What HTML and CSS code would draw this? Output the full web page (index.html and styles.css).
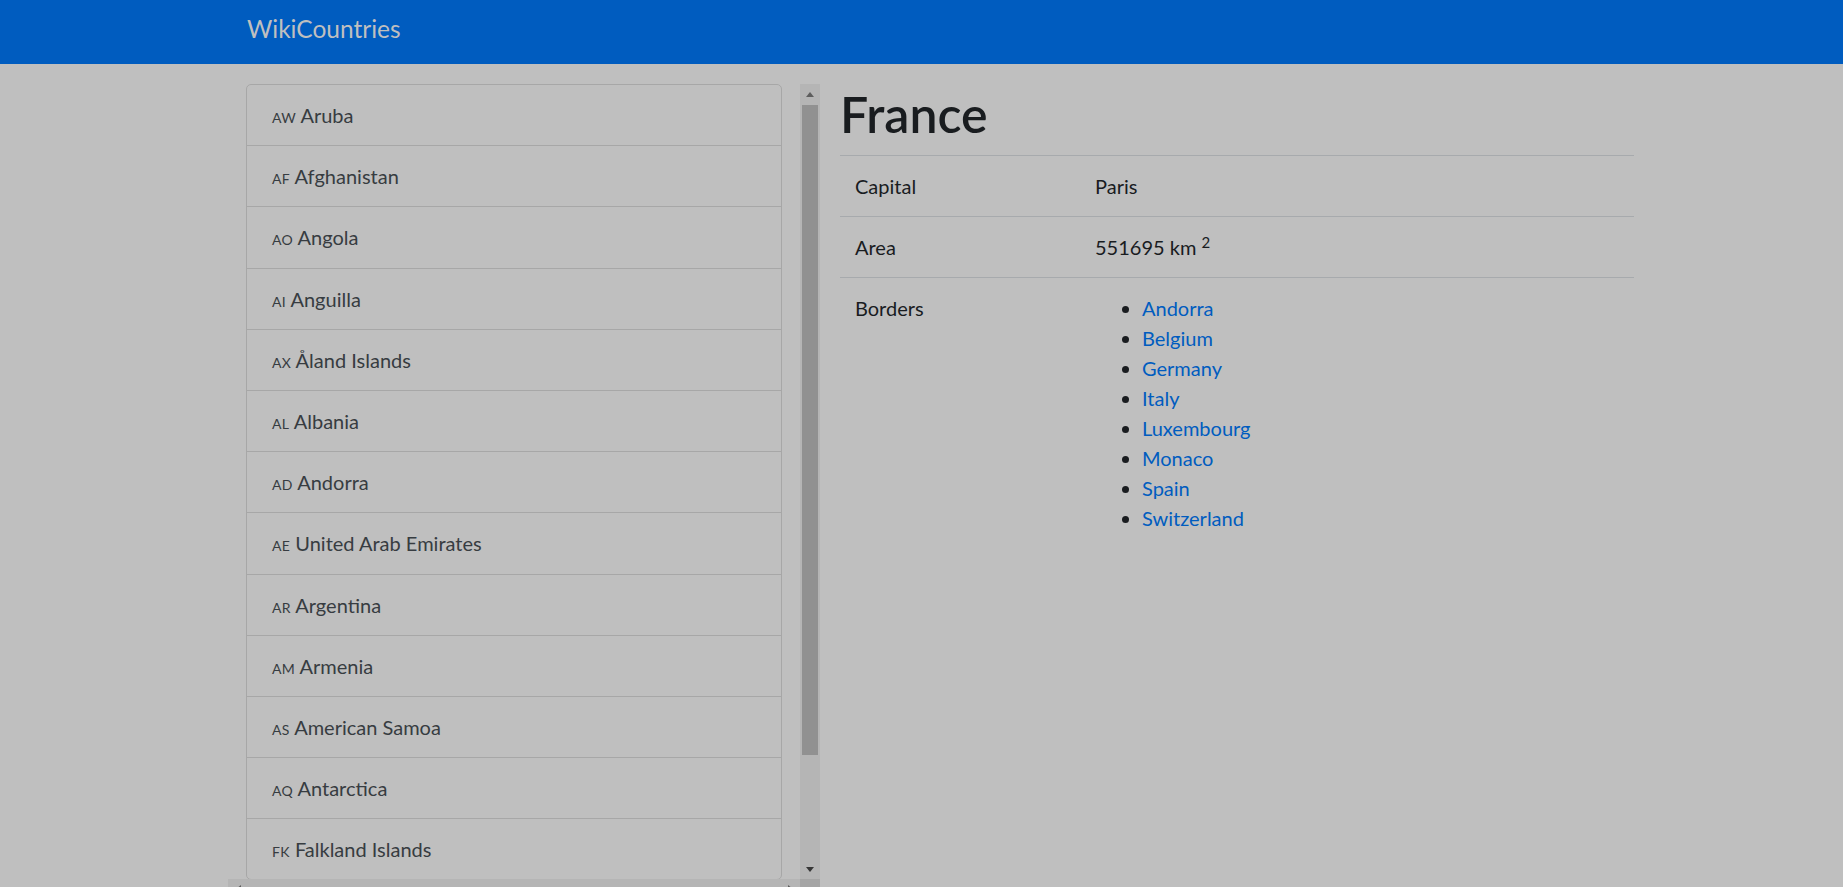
FILE: index.html
```html
<!DOCTYPE html>
<html lang="en">
<head>
<meta charset="utf-8">
<title>WikiCountries</title>
<link rel="stylesheet" href="styles.css">
</head>
<body>
<nav class="navbar">
  <a class="brand" href="#">WikiCountries</a>
</nav>
<main class="layout">
  <section class="scroller">
    <div class="scroll-view">
      <div class="list-group">
        <a class="item" href="#"><span class="code">AW</span> Aruba</a>
        <a class="item" href="#"><span class="code">AF</span> Afghanistan</a>
        <a class="item" href="#"><span class="code">AO</span> Angola</a>
        <a class="item" href="#"><span class="code">AI</span> Anguilla</a>
        <a class="item" href="#"><span class="code">AX</span> Åland Islands</a>
        <a class="item" href="#"><span class="code">AL</span> Albania</a>
        <a class="item" href="#"><span class="code">AD</span> Andorra</a>
        <a class="item" href="#"><span class="code">AE</span> United Arab Emirates</a>
        <a class="item" href="#"><span class="code">AR</span> Argentina</a>
        <a class="item" href="#"><span class="code">AM</span> Armenia</a>
        <a class="item" href="#"><span class="code">AS</span> American Samoa</a>
        <a class="item" href="#"><span class="code">AQ</span> Antarctica</a>
        <a class="item" href="#"><span class="code">FK</span> Falkland Islands</a>
      </div>
    </div>
    <div class="vbar">
      <div class="sb-btn"><span class="arrow-up"></span></div>
      <div class="vtrack"><div class="vthumb"></div></div>
      <div class="sb-btn"><span class="arrow-down"></span></div>
    </div>
    <div class="hbar">
      <div class="sb-btn"><span class="arrow-left"></span></div>
      <div class="htrack"></div>
      <div class="sb-btn"><span class="arrow-right"></span></div>
    </div>
    <div class="corner"></div>
  </section>
  <section class="detail">
    <h1>France</h1>
    <table class="facts">
      <tr>
        <td class="label">Capital</td>
        <td>Paris</td>
      </tr>
      <tr>
        <td class="label">Area</td>
        <td>551695 km <sup>2</sup></td>
      </tr>
      <tr>
        <td class="label">Borders</td>
        <td>
          <ul class="borders">
            <li><a href="#">Andorra</a></li>
            <li><a href="#">Belgium</a></li>
            <li><a href="#">Germany</a></li>
            <li><a href="#">Italy</a></li>
            <li><a href="#">Luxembourg</a></li>
            <li><a href="#">Monaco</a></li>
            <li><a href="#">Spain</a></li>
            <li><a href="#">Switzerland</a></li>
          </ul>
        </td>
      </tr>
    </table>
  </section>
</main>
</body>
</html>
```
FILE: styles.css
```css
html, body {
  margin: 0;
  height: 100%;
  overflow: hidden;
}

body {
  background: #bfbfbf;
  font-family: Lato, "Liberation Sans", sans-serif;
  font-size: 20px;
  line-height: 30px;
  color: #191c1f;
}

.navbar {
  height: 64px;
  box-sizing: border-box;
  padding: 0 0 7px 247px;
  display: flex;
  align-items: center;
  background: #005cbf;
}

.brand {
  font-size: 24.5px;
  line-height: 1.2;
  color: #bfbfbf;
  text-decoration: none;
}

.layout {
  display: flex;
  align-items: flex-start;
  gap: 20px;
  padding: 20px 0 0 228px;
}

/* scrollable country list */
.scroller {
  flex: none;
  display: grid;
  grid-template-columns: 572px 20px;
  grid-template-rows: 795px 20px;
}

.scroll-view {
  overflow: hidden;
  padding: 0 18px;
}

.list-group {
  border: 1px solid #a7a7a7;
  border-radius: 5px;
}

.item {
  display: block;
  height: 30px;
  padding: 15.1px 25px;
  color: #373c41;
  text-decoration: none;
  white-space: nowrap;
}

.item + .item {
  border-top: 1px solid #a7a7a7;
}

.code {
  font-size: 14px;
  line-height: 1;
  letter-spacing: 0.3px;
}

/* scrollbars */
.vbar {
  display: flex;
  flex-direction: column;
  background: #b5b5b5;
}

.hbar {
  display: flex;
  background: #b5b5b5;
}

.sb-btn {
  flex: none;
  width: 20px;
  height: 20px;
  display: flex;
  align-items: center;
  justify-content: center;
}

.vtrack {
  flex: 1;
  padding: 1px 2px 0;
}

.vthumb {
  height: 650px;
  background: #919191;
}

.htrack {
  flex: 1;
}

.corner {
  background: #a5a5a5;
}

.arrow-up {
  width: 0;
  height: 0;
  border-left: 4.5px solid transparent;
  border-right: 4.5px solid transparent;
  border-bottom: 5px solid #5e5e5e;
}

.arrow-down {
  width: 0;
  height: 0;
  border-left: 4.5px solid transparent;
  border-right: 4.5px solid transparent;
  border-top: 5px solid #363636;
}

.arrow-left {
  width: 0;
  height: 0;
  border-top: 4.5px solid transparent;
  border-bottom: 4.5px solid transparent;
  border-right: 5px solid #5e5e5e;
}

.arrow-right {
  width: 0;
  height: 0;
  border-top: 4.5px solid transparent;
  border-bottom: 4.5px solid transparent;
  border-left: 5px solid #5e5e5e;
}

/* country detail */
.detail {
  width: 794px;
}

.detail h1 {
  margin: 0 0 11px;
  font-size: 50px;
  line-height: 60px;
  font-weight: 600;
  color: #191c1f;
}

.facts {
  width: 100%;
  border-collapse: collapse;
}

.facts td {
  border-top: 1px solid #a7aaad;
  padding: 15px;
  vertical-align: top;
  text-align: left;
}

.facts td.label {
  width: 210px;
}

.facts sup {
  font-size: 75%;
  line-height: 0;
  position: relative;
  vertical-align: baseline;
  top: -0.5em;
}

.borders {
  margin: 0 0 20px;
  padding-left: 47px;
}

.borders a {
  color: #005cbf;
  text-decoration: none;
}
```
